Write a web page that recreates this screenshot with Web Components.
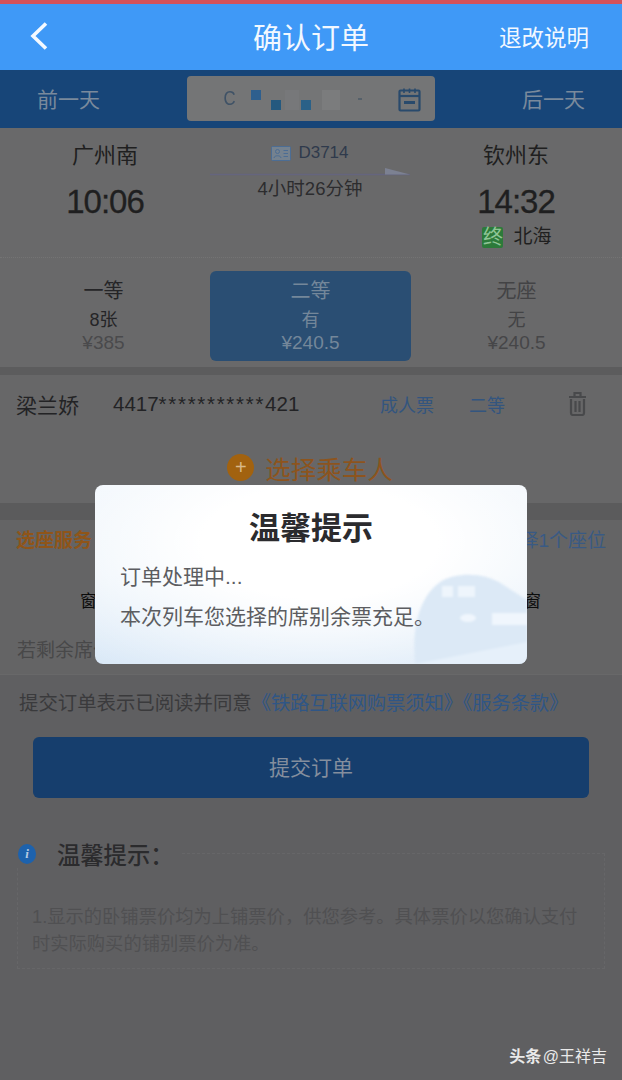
<!DOCTYPE html>
<html lang="zh">
<head>
<meta charset="utf-8">
<title>确认订单</title>
<style>
    html, body { margin: 0; background: #5f5f61; }
    body {
        width: 622px;
        height: 1080px;
        overflow: hidden;
        font-family: "Liberation Sans", "Noto Sans CJK SC", sans-serif;
    }
</style>
</head>
<body>
<order-page></order-page>

<script>
const CJK = `"Liberation Sans", "Noto Sans CJK SC", sans-serif`;

class AppHeader extends HTMLElement {
    constructor() {
        super();
        this.attachShadow({ mode: "open" }).innerHTML = `
            <style>
                :host {
                    display: grid;
                    grid-template-columns: 1fr auto 1fr;
                    align-items: center;
                    height: 70px;
                    box-sizing: border-box;
                    padding: 0 33px 3px;
                    border-top: 4px solid #d4525b;
                    background: #3f99f7;
                    color: #f2f8ff;
                    font-family: ${CJK};
                }
                svg { width: 20px; height: 30px; display: block; margin-left: -4px; }
                .title { font-size: 29px; }
                .right { font-size: 22.5px; text-align: right; }
            </style>
            <svg viewBox="0 0 20 30"><path d="M17 2.5 L4 15 L17 27.5" fill="none" stroke="#f4f9ff" stroke-width="3.6"/></svg>
            <div class="title">确认订单</div>
            <div class="right">退改说明</div>
        `;
    }
}

class DateBar extends HTMLElement {
    constructor() {
        super();
        this.attachShadow({ mode: "open" }).innerHTML = `
            <style>
                :host {
                    display: grid;
                    grid-template-columns: 187px 248px 187px;
                    align-items: center;
                    height: 58px;
                    background: #174578;
                    color: #7a8a9c;
                    font-family: ${CJK};
                    font-size: 21px;
                }
                .prev { padding-left: 37px; margin-top: -3px; }
                .next { padding-left: 87px; margin-top: -3px; }
                .pill {
                    position: relative;
                    height: 45px;
                    margin-top: -1px;
                    border-radius: 4px;
                    background: #747576;
                }
                .pill span { position: absolute; left: 35px; top: 10px; font-size: 21px; line-height: 24px; transform: scaleX(.8); color: #3f5266; }
                .pill i { position: absolute; display: block; }
                svg { position: absolute; left: 210px; top: 11px; width: 25px; height: 25px; }
            </style>
            <div class="prev">前一天</div>
            <div class="pill">
                <span>C</span>
                <i style="left:64px;top:14px;width:10px;height:10px;background:#2e5f8e"></i>
                <i style="left:84px;top:24px;width:10px;height:10px;background:#24597f"></i>
                <i style="left:98px;top:14px;width:14px;height:20px;background:#77787a"></i>
                <i style="left:114px;top:24px;width:10px;height:10px;background:#2a6188"></i>
                <i style="left:135px;top:14px;width:18px;height:20px;background:#7b7c7d"></i>
                <i style="left:171px;top:22px;width:4px;height:2px;background:#55606a"></i>
                <svg viewBox="0 0 25 25" fill="none" stroke="#294a6c" stroke-width="2.2">
                    <rect x="2.5" y="3.5" width="20" height="20" rx="1"/>
                    <path d="M2.5 9H22.5"/>
                    <path d="M7 1.5V6M12.5 1.5V6M18 1.5V6" stroke-width="1.6"/>
                    <path d="M7 15.5H18" stroke-width="3"/>
                </svg>
            </div>
            <div class="next">后一天</div>
        `;
    }
}

class TripSummary extends HTMLElement {
    constructor() {
        super();
        this.attachShadow({ mode: "open" }).innerHTML = `
            <style>
                :host {
                    display: grid;
                    grid-template-columns: 210px 200px 212px;
                    height: 130px;
                    box-sizing: border-box;
                    background: #69696a;
                    border-bottom: 1px dotted #747474;
                    color: #1f1f20;
                    font-family: ${CJK};
                    text-align: center;
                }
                .station { font-size: 22px; line-height: 30px; padding-top: 13px; }
                .time { font-size: 33px; letter-spacing: -1px; line-height: 40px; margin-top: 11px; -webkit-text-stroke: .3px #1f1f20; }
                .mid { padding-top: 13px; color: #2c2c2e; }
                .num { display: flex; justify-content: center; align-items: center; gap: 7px; font-size: 17px; line-height: 24px; color: #2f3a4c; }
                .num svg { width: 20px; height: 15px; }
                .line { height: 19px; }
                .line svg { display: block; width: 200px; height: 14px; }
                .dur { font-size: 18.5px; line-height: 24px; margin-top: -7px; }
                .stop { display: flex; justify-content: center; align-items: center; gap: 10px; font-size: 19px; line-height: 26px; margin-top: 2px; padding-left: 2px; }
                .end { width: 21px; height: 21px; border-radius: 2px; background: #2c7a3a; color: #8fc596; font-size: 20px; line-height: 21px; }
            </style>
            <div>
                <div class="station">广州南</div>
                <div class="time">10:06</div>
            </div>
            <div class="mid">
                <div class="num">
                    <svg viewBox="0 0 20 15" fill="none" stroke="#4c6d94">
                        <rect x=".5" y=".5" width="19" height="14" rx="1" fill="#75828f"/>
                        <circle cx="6.5" cy="5.5" r="2"/>
                        <path d="M3 12C3 9 10 9 10 12"/>
                        <path d="M12.5 4.5H17M12.5 7.5H17M12.5 10.5H17"/>
                    </svg>
                    <span>D3714</span>
                </div>
                <div class="line">
                    <svg viewBox="0 0 200 14" preserveAspectRatio="none"><path d="M0 9.5H200" stroke="#65657e" stroke-width="1.4"/><path d="M175 3L200 9.5H175Z" fill="#7c8192"/></svg>
                </div>
                <div class="dur">4小时26分钟</div>
            </div>
            <div>
                <div class="station">钦州东</div>
                <div class="time">14:32</div>
                <div class="stop"><span class="end">终</span><span>北海</span></div>
            </div>
        `;
    }
}

class SeatOption extends HTMLElement {
    constructor() {
        super();
        const name = this.getAttribute("name");
        const count = this.getAttribute("count");
        const price = this.getAttribute("price");
        this.attachShadow({ mode: "open" }).innerHTML = `
            <style>
                :host {
                    display: block;
                    height: 90px;
                    box-sizing: border-box;
                    padding-top: 4px;
                    border-radius: 6px;
                    color: var(--c1, #252527);
                    text-align: center;
                    font-family: ${CJK};
                }
                :host([selected]) { background: #2a4e73; --c1: #74879a; --c2: #74879a; --c3: #74879a; }
                :host([muted]) { --c1: #434345; --c2: #434345; --c3: #464648; }
                .name { font-size: 20px; line-height: 32px; }
                .count { font-size: 18px; line-height: 24px; margin-top: 1px; color: var(--c2, #252527); }
                .price { font-size: 19px; line-height: 26px; margin-top: -2px; color: var(--c3, #4a4a4c); }
            </style>
            <div class="name">${name}</div>
            <div class="count">${count}</div>
            <div class="price">${price}</div>
        `;
    }
}

class SeatPicker extends HTMLElement {
    constructor() {
        super();
        this.attachShadow({ mode: "open" }).innerHTML = `
            <style>
                :host {
                    display: grid;
                    grid-template-columns: 210px 201px 211px;
                    height: 109px;
                    box-sizing: border-box;
                    padding-top: 13px;
                    background: #69696a;
                }
                ::slotted(:first-child) { margin-right: 3px; }
            </style>
            <slot></slot>
        `;
    }
}

class PassengerRow extends HTMLElement {
    constructor() {
        super();
        this.attachShadow({ mode: "open" }).innerHTML = `
            <style>
                :host {
                    display: flex;
                    align-items: center;
                    height: 58px;
                    box-sizing: border-box;
                    padding-left: 16px;
                    border-bottom: 1px solid #676768;
                    color: #232325;
                    font-family: ${CJK};
                }
                .name { width: 97px; font-size: 21px; }
                .id { width: 267px; font-size: 20.5px; padding-top: 1px; white-space: nowrap; }
                .id span { letter-spacing: 1.7px; }
                .tag { font-size: 18px; color: #33557f; }
                .tag.a { width: 89px; }
                .tag.b { width: 99px; }
                svg { width: 19px; height: 25px; display: block; }
            </style>
            <div class="name">梁兰娇</div>
            <div class="id">4417<span>***********</span>421</div>
            <div class="tag a">成人票</div>
            <div class="tag b">二等</div>
            <svg viewBox="0 0 19 25" fill="none" stroke="#48494b" stroke-width="2.2">
                <path d="M1 6H18M6.5 5V2H12.5V5"/>
                <path d="M3 8V22Q3 24 5 24H14Q16 24 16 22V8"/>
                <path d="M7.5 10V21M11.5 10V21"/>
            </svg>
        `;
    }
}

class AddPassenger extends HTMLElement {
    constructor() {
        super();
        this.attachShadow({ mode: "open" }).innerHTML = `
            <style>
                :host {
                    display: flex;
                    align-items: center;
                    justify-content: center;
                    gap: 11px;
                    height: 70px;
                    padding-right: 2px;
                    padding-bottom: 2px;
                    color: #8d541d;
                    font-family: ${CJK};
                    font-size: 25.5px;
                    box-sizing: border-box;
                }
                .plus {
                    width: 27px;
                    height: 27px;
                    border-radius: 50%;
                    background: #a2620f;
                    color: #d9b98a;
                    font-size: 20px;
                    line-height: 26px;
                    text-align: center;
                }
            </style>
            <div class="plus">+</div>
            <div>选择乘车人</div>
        `;
    }
}

class SeatService extends HTMLElement {
    constructor() {
        super();
        this.attachShadow({ mode: "open" }).innerHTML = `
            <style>
                :host {
                    display: block;
                    height: 155px;
                    box-sizing: border-box;
                    padding: 7px 16px 0;
                    background: #646465;
                    border-bottom: 1px solid #686869;
                    font-family: ${CJK};
                    font-size: 19px;
                }
                .top { display: flex; justify-content: space-between; line-height: 28px; }
                .label { color: #8f5519; font-weight: 700; }
                .hint { color: #395a84; }
                .seats { display: flex; justify-content: space-between; padding: 30px 65px 0 64px; color: #0c0c0c; font-size: 17px; line-height: 34px; }
                .note { color: #484849; margin-top: 15px; padding-left: 1px; line-height: 34px; }
            </style>
            <div class="top"><span class="label">选座服务</span><span class="hint">请选择1个座位</span></div>
            <div class="seats"><span>窗</span><span>窗</span></div>
            <div class="note">若剩余席位不足，将无法选座</div>
        `;
    }
}

class AgreeRow extends HTMLElement {
    constructor() {
        super();
        this.attachShadow({ mode: "open" }).innerHTML = `
            <style>
                :host {
                    display: block;
                    height: 62px;
                    box-sizing: border-box;
                    padding: 13px 0 0 19px;
                    line-height: 30px;
                    color: #3a3a3c;
                    font-family: ${CJK};
                    font-size: 19.4px;
                    white-space: nowrap;
                }
                a { color: #2f5686; text-decoration: none; letter-spacing: -.2px; }
            </style>
            提交订单表示已阅读并同意<a>《铁路互联网购票须知》《服务条款》</a>
        `;
    }
}

class SubmitButton extends HTMLElement {
    constructor() {
        super();
        this.attachShadow({ mode: "open" }).innerHTML = `
            <style>
                :host {
                    display: flex;
                    align-items: center;
                    justify-content: center;
                    height: 61px;
                    box-sizing: border-box;
                    padding-bottom: 3px;
                    margin: 0 33px;
                    border-radius: 6px;
                    background: #163e6d;
                    color: #848e9d;
                    font-family: ${CJK};
                    font-size: 21px;
                }
            </style>
            <slot></slot>
        `;
    }
}

class TipsBox extends HTMLElement {
    constructor() {
        super();
        this.attachShadow({ mode: "open" }).innerHTML = `
            <style>
                :host {
                    display: block;
                    position: relative;
                    height: 116px;
                    margin: 55px 17px 0;
                    box-sizing: border-box;
                    border: 1px dashed #666668;
                    font-family: ${CJK};
                }
                .head {
                    position: absolute;
                    left: -1px;
                    top: -14px;
                    display: flex;
                    align-items: center;
                    gap: 21px;
                    height: 28px;
                    padding: 0 8px 0 1px;
                    background: #5f5f61;
                    color: #2b2b2d;
                    font-size: 23.3px;
                    font-weight: 500;
                }
                .info {
                    width: 18px;
                    height: 20px;
                    border-radius: 50%;
                    background: #1d62ad;
                    color: #b7cbe2;
                    font: italic 700 13px/20px "Liberation Serif", serif;
                    text-align: center;
                }
                .body {
                    padding: 49px 17px 0 14px;
                    color: #505052;
                    font-size: 18.3px;
                    line-height: 27px;
                }
            </style>
            <div class="head"><span class="info">i</span><span>温馨提示：</span></div>
            <div class="body">1.显示的卧铺票价均为上铺票价，供您参考。具体票价以您确认支付时实际购买的铺别票价为准。</div>
        `;
    }
}

class TipDialog extends HTMLElement {
    constructor() {
        super();
        this.attachShadow({ mode: "open" }).innerHTML = `
            <style>
                :host {
                    position: absolute;
                    left: 95px;
                    top: 485px;
                    width: 432px;
                    height: 179px;
                    box-sizing: border-box;
                    overflow: hidden;
                    border-radius: 8px;
                    padding: 0 25px;
                    background:
                        radial-gradient(ellipse 78% 90% at 52% 32%, #ffffff 35%, rgba(255,255,255,0) 100%),
                        linear-gradient(180deg, #edf4fb 0%, #e9f2fa 50%, #d9e8f7 100%);
                    font-family: ${CJK};
                    color: #5c5d61;
                }
                svg { position: absolute; right: 0; bottom: 0; width: 115px; height: 94px; filter: blur(1px); }
                h2 {
                    position: relative;
                    margin: 0;
                    padding-top: 26px;
                    font-size: 31px;
                    line-height: 36px;
                    font-weight: 700;
                    color: #2b2b2e;
                    text-align: center;
                }
                p { position: relative; margin: 0; font-size: 21px; line-height: 40px; white-space: nowrap; }
                h2 + p { margin-top: 10px; }
            </style>
            <svg viewBox="0 0 115 94">
                <path d="M3 94C0 60 6 28 28 12C44 2 72 2 90 14L115 30V94Z" fill="#dce9f6"/>
                <path d="M30 16h11v11h-11zM46 16h17v11h-17z" fill="#eef5fc"/>
                <ellipse cx="56" cy="48" rx="8" ry="4" fill="#f0f6fd"/>
                <path d="M80 43h35v12h-35z" fill="#f0f6fd"/>
                <path d="M3 94L115 72V94Z" fill="#e6f0fa"/>
            </svg>
            <h2>温馨提示</h2>
            <p>订单处理中...</p>
            <p>本次列车您选择的席别余票充足。</p>
        `;
    }
}

class WatermarkTag extends HTMLElement {
    constructor() {
        super();
        this.attachShadow({ mode: "open" }).innerHTML = `
            <style>
                :host {
                    position: absolute;
                    right: 15px;
                    top: 1045px;
                    color: #eaeaea;
                    font-family: ${CJK};
                    font-size: 16px;
                    line-height: 24px;
                    white-space: nowrap;
                }
                b { margin-right: -3px; }
            </style>
            <b>头条</b> @王祥吉
        `;
    }
}

class OrderPage extends HTMLElement {
    constructor() {
        super();
        this.attachShadow({ mode: "open" }).innerHTML = `
            <style>
                :host { display: block; position: relative; width: 622px; height: 1080px; overflow: hidden; }
                .gap-a { height: 8px; background: #5c5c5d; }
                .light { background: #676768; }
                .gap-b { height: 17px; background: #5b5b5c; }
            </style>
            <app-header></app-header>
            <date-bar></date-bar>
            <trip-summary></trip-summary>
            <seat-picker>
                <seat-option name="一等" count="8张" price="¥385"></seat-option>
                <seat-option name="二等" count="有" price="¥240.5" selected></seat-option>
                <seat-option name="无座" count="无" price="¥240.5" muted></seat-option>
            </seat-picker>
            <div class="gap-a"></div>
            <div class="light">
                <passenger-row></passenger-row>
                <add-passenger></add-passenger>
            </div>
            <div class="gap-b"></div>
            <seat-service></seat-service>
            <agree-row></agree-row>
            <submit-button>提交订单</submit-button>
            <tips-box></tips-box>
            <tip-dialog></tip-dialog>
            <watermark-tag></watermark-tag>
        `;
    }
}

customElements.define("app-header", AppHeader);
customElements.define("date-bar", DateBar);
customElements.define("trip-summary", TripSummary);
customElements.define("seat-option", SeatOption);
customElements.define("seat-picker", SeatPicker);
customElements.define("passenger-row", PassengerRow);
customElements.define("add-passenger", AddPassenger);
customElements.define("seat-service", SeatService);
customElements.define("agree-row", AgreeRow);
customElements.define("submit-button", SubmitButton);
customElements.define("tips-box", TipsBox);
customElements.define("tip-dialog", TipDialog);
customElements.define("watermark-tag", WatermarkTag);
customElements.define("order-page", OrderPage);
</script>
</body>
</html>
